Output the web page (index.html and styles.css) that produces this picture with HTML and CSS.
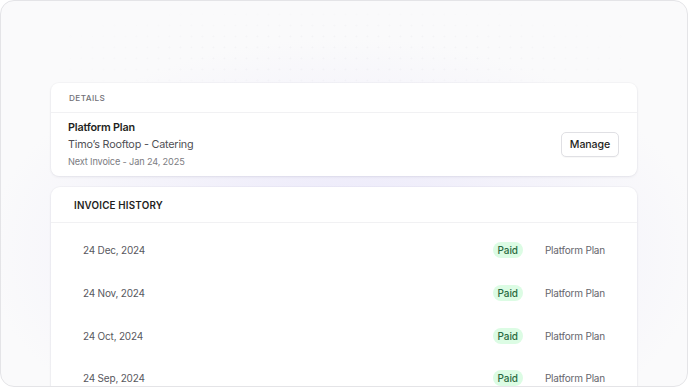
FILE: index.html
```html
<!DOCTYPE html>
<html lang="en">
<head>
<meta charset="utf-8">
<title>Billing</title>
<link rel="stylesheet" href="styles.css">
</head>
<body>
<div class="frame">
  <div class="dots"></div>
  <div class="glow"></div>
  <div class="content">
    <section class="card details">
      <div class="card-head muted-head">DETAILS</div>
      <div class="details-body">
        <div class="plan-info">
          <div class="plan-name">Platform Plan</div>
          <div class="plan-venue">Timo’s Rooftop - Catering</div>
          <div class="plan-next">Next Invoice - Jan 24, 2025</div>
        </div>
        <button class="btn">Manage</button>
      </div>
    </section>
    <section class="card history">
      <div class="card-head strong-head">INVOICE HISTORY</div>
      <div class="rows">
        <div class="row"><span class="date">24 Dec, 2024</span><span class="right"><span class="badge">Paid</span><span class="plan">Platform Plan</span></span></div>
        <div class="row"><span class="date">24 Nov, 2024</span><span class="right"><span class="badge">Paid</span><span class="plan">Platform Plan</span></span></div>
        <div class="row"><span class="date">24 Oct, 2024</span><span class="right"><span class="badge">Paid</span><span class="plan">Platform Plan</span></span></div>
        <div class="row"><span class="date">24 Sep, 2024</span><span class="right"><span class="badge">Paid</span><span class="plan">Platform Plan</span></span></div>
      </div>
    </section>
  </div>
</div>
</body>
</html>
```

FILE: styles.css
```css
* { box-sizing: border-box; }
html, body { margin: 0; padding: 0; background: #ffffff; }
body {
  font-family: Inter, "Noto Sans", sans-serif;
  width: 688px;
  height: 387px;
  overflow: hidden;
}
.frame {
  position: relative;
  width: 688px;
  height: 387px;
  border: 1px solid #e4e4e7;
  border-radius: 14px;
  background: #fafafb;
  overflow: hidden;
}
.dots {
  position: absolute;
  left: 64px;
  top: 8px;
  width: 560px;
  height: 76px;
  background-image: radial-gradient(circle, rgba(120,120,150,0.045) 0.8px, transparent 1.2px);
  background-size: 11px 11px;
  -webkit-mask-image: radial-gradient(ellipse at 50% 60%, #000 35%, transparent 80%);
  mask-image: radial-gradient(ellipse at 50% 60%, #000 35%, transparent 80%);
}
.glow {
  position: absolute;
  left: -40px;
  top: 20px;
  width: 768px;
  height: 420px;
  background: radial-gradient(ellipse 55% 60% at 50% 55%, rgba(221,216,250,0.6) 0%, rgba(232,229,250,0.4) 45%, rgba(250,250,251,0) 85%);
}
.content {
  position: relative;
  padding: 82px 0 0 50px;
  display: flex;
  flex-direction: column;
  gap: 11px;
}
.card {
  width: 586px;
  background: #ffffff;
  border-radius: 8px;
  box-shadow: 0 1px 3px rgba(20,20,50,0.07), 0 0 0 1px rgba(20,20,50,0.02);
}
.card-head {
  border-bottom: 1px solid #f1f1f3;
  text-transform: uppercase;
}
.muted-head {
  height: 30px;
  padding: 1px 0 0 18px;
  display: flex;
  align-items: center;
  font-size: 8.2px;
  font-weight: 500;
  letter-spacing: 0.4px;
  color: #707076;
}
.details-body {
  display: flex;
  align-items: center;
  justify-content: space-between;
  padding: 6px 18px 6px 17px;
}
.plan-info { display: flex; flex-direction: column; }
.plan-name { font-size: 10.8px; font-weight: 600; color: #1f1f22; line-height: 17px; letter-spacing: -0.2px; }
.plan-venue { font-size: 10.8px; color: #4f4f55; line-height: 17px; letter-spacing: -0.2px; }
.plan-next { font-size: 9.2px; color: #7c7c82; line-height: 17px; letter-spacing: -0.15px; }
.btn {
  font-family: inherit;
  font-size: 10.6px;
  font-weight: 500;
  letter-spacing: -0.1px;
  color: #1f1f22;
  background: #ffffff;
  border: 1px solid #e0e0e4;
  border-radius: 5px;
  width: 58px;
  height: 25px;
  padding: 0;
  box-shadow: 0 1px 1px rgba(0,0,0,0.03);
}
.history { height: 240px; border-radius: 9px 9px 0 0; }
.strong-head {
  height: 36px;
  padding: 1px 0 0 23px;
  display: flex;
  align-items: center;
  font-size: 9.8px;
  font-weight: 600;
  letter-spacing: 0.2px;
  color: #1f1f22;
}
.rows { padding-top: 6px; }
.row {
  height: 42.67px;
  display: flex;
  align-items: center;
  justify-content: space-between;
  padding: 0 32px 0 32px;
}
.date { font-size: 10px; color: #58585e; letter-spacing: -0.2px; }
.right { display: flex; align-items: center; gap: 22px; }
.badge {
  background: #dcfce4;
  color: #2a6a40;
  font-size: 10px;
  font-weight: 500;
  letter-spacing: -0.1px;
  border-radius: 9px;
  height: 16px;
  line-height: 16px;
  padding: 0 5px;
}
.plan { font-size: 10px; color: #66666c; letter-spacing: -0.2px; }
```
